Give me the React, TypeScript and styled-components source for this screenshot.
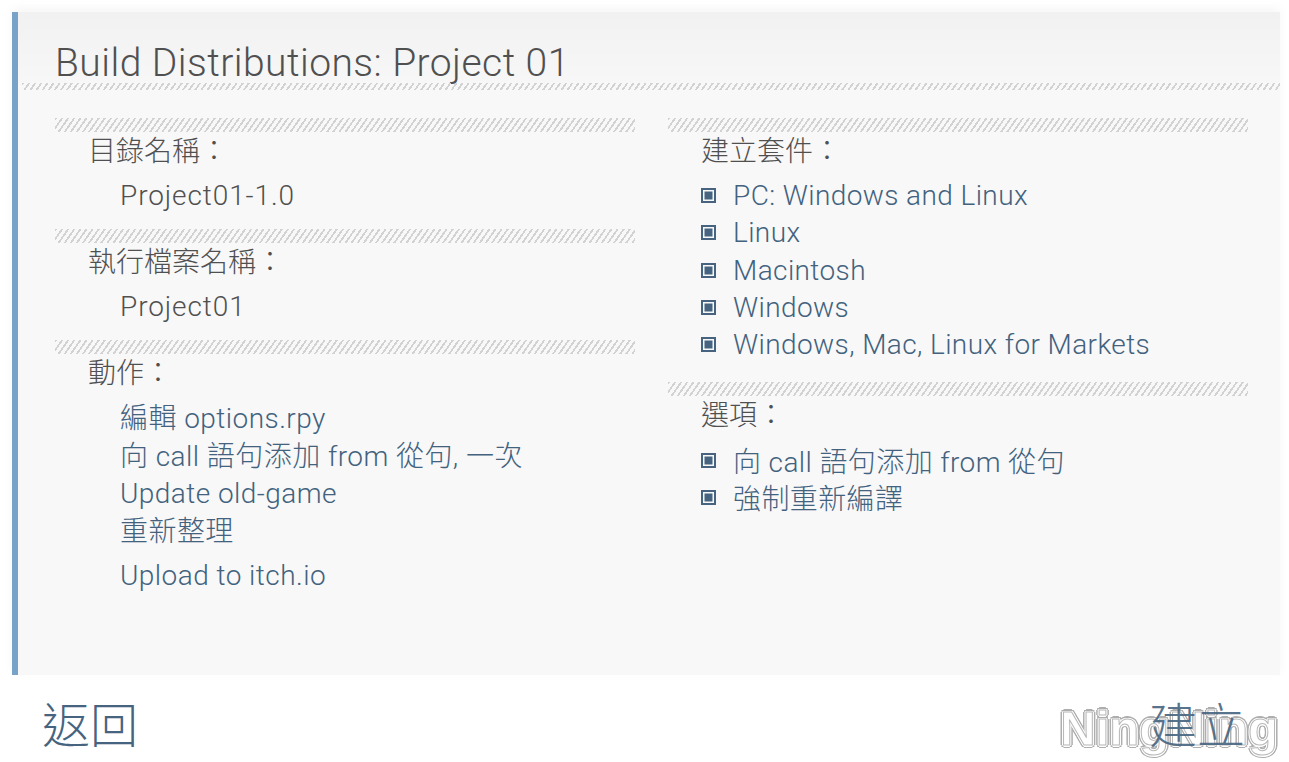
import React from 'react';
import styled, { createGlobalStyle } from 'styled-components';

const GlobalStyle = createGlobalStyle`
  html, body {
    margin: 0;
    padding: 0;
    background: #ffffff;
  }
  body {
    font-family: Roboto, "Noto Sans CJK TC", "Noto Sans", sans-serif;
    width: 1289px;
    height: 762px;
    overflow: hidden;
  }
`

const Screen = styled.div`
  position: relative;
  width: 1289px;
  height: 762px;
  display: flex;
  flex-direction: column;
  padding-top: 12px;
  box-sizing: border-box;
`

const Frame = styled.div`
  display: flex;
  margin-left: 12px;
  width: 1268px;
  height: 663px;
  box-shadow: 0 -4px 10px rgba(0, 0, 0, 0.04);
`

const SideBar = styled.div`
  width: 6px;
  background: #78a2c8;
  flex-shrink: 0;
`

const Panel = styled.div`
  flex: 1;
  background: #f8f8f8;
  display: flex;
  flex-direction: column;
`

const Header = styled.div`
  height: 71px;
  background: linear-gradient(#f1f1f1, #f7f7f7);
  display: flex;
  align-items: flex-end;
  padding-left: 37px;
  box-sizing: border-box;
`

const Title = styled.h1`
  margin: 0;
  font-weight: 300;
  font-size: 39px;
  line-height: 40px;
  letter-spacing: 0.45px;
  color: #505050;
`

const Hatch = styled.div<{ $h: number }>`
  height: ${p => p.$h}px;
  background: repeating-linear-gradient(
    125deg,
    #d2d2d2 0px,
    #d2d2d2 1.8px,
    transparent 1.8px,
    transparent 5px
  );
`

const TitleHatch = styled(Hatch)`
  margin-left: 4px;
`

const Columns = styled.div`
  display: grid;
  grid-template-columns: 580px 580px;
  column-gap: 33px;
  padding: 28px 0 0 37px;
`

const Column = styled.div`
  display: flex;
  flex-direction: column;
`

const Section = styled.div<{ $mb?: number }>`
  display: flex;
  flex-direction: column;
  margin-bottom: ${p => p.$mb ?? 10}px;
`

const Label = styled.div`
  padding-left: 33px;
  font-size: 28px;
  font-weight: 300;
  line-height: 40px;
  color: #505050;
`

const Value = styled.div`
  padding-left: 65px;
  font-size: 28px;
  font-weight: 300;
  letter-spacing: 0.9px;
  line-height: 47px;
  color: #505050;
`

const ActionList = styled.div`
  display: flex;
  flex-direction: column;
  padding-left: 65px;
  margin-top: 6px;
`

const Action = styled.div<{ $gap?: number }>`
  font-size: 28px;
  font-weight: 300;
  letter-spacing: 0.45px;
  line-height: 37.5px;
  color: #42627e;
  margin-top: ${p => p.$gap ?? 0}px;
`

const CheckList = styled.div`
  display: flex;
  flex-direction: column;
  padding-left: 33px;
  margin-top: 5px;
`

const CheckRow = styled.div`
  display: flex;
  align-items: center;
  height: 37.3px;
  gap: 17px;
  font-size: 28px;
  font-weight: 300;
  letter-spacing: 0.4px;
  color: #42627e;
`

const Box = styled.span`
  width: 15px;
  height: 15px;
  box-sizing: border-box;
  border: 2px solid #466480;
  background: #466480;
  box-shadow: inset 0 0 0 1.5px #f8f8f8;
  flex-shrink: 0;
`

const BottomBar = styled.div`
  display: flex;
  justify-content: space-between;
  align-items: center;
  padding: 7px 44px 0 42px;
  height: 87px;
  box-sizing: border-box;
`

const BigButton = styled.div<{ $top?: boolean }>`
  font-size: 48px;
  line-height: 60px;
  color: #466480;
  font-family: "Noto Sans CJK TC", sans-serif;
  font-weight: 300;
  position: relative;
  z-index: ${p => (p.$top ? 2 : 0)};
  opacity: ${p => (p.$top ? 0.9 : 1)};
`

const Watermark = styled.div`
  position: absolute;
  right: 11px;
  bottom: 6px;
  z-index: 1;
  opacity: 0.7;
  font-family: "Liberation Sans", Arial, sans-serif;
  font-weight: 700;
  font-size: 49px;
  color: #ffffff;
  -webkit-text-stroke: 1px #9a9a9a;
  text-shadow:
    1.5px 0 #ffffff, -1.5px 0 #ffffff, 0 1.5px #ffffff, 0 -1.5px #ffffff,
    1px 1px #ffffff, -1px -1px #ffffff, 1px -1px #ffffff, -1px 1px #ffffff,
    3px 0 #8c8c8c, -3px 0 #8c8c8c, 0 3px #8c8c8c, 0 -3px #8c8c8c,
    2px 2px #8c8c8c, -2px -2px #8c8c8c, 2px -2px #8c8c8c, -2px 2px #8c8c8c;
`

const packages = [
  'PC: Windows and Linux',
  'Linux',
  'Macintosh',
  'Windows',
  'Windows, Mac, Linux for Markets',
]

const options = ['向 call 語句添加 from 從句', '強制重新編譯']

const actions = [
  '編輯 options.rpy',
  '向 call 語句添加 from 從句, 一次',
  'Update old-game',
  '重新整理',
]

const App = () => {
  return (
    <Screen>
      <GlobalStyle />
      <Frame>
        <SideBar />
        <Panel>
          <Header>
            <Title>Build Distributions: Project 01</Title>
          </Header>
          <TitleHatch $h={7} />
          <Columns>
            <Column>
              <Section>
                <Hatch $h={14} />
                <Label>目錄名稱：</Label>
                <Value>Project01-1.0</Value>
              </Section>
              <Section>
                <Hatch $h={14} />
                <Label>執行檔案名稱：</Label>
                <Value>Project01</Value>
              </Section>
              <Section>
                <Hatch $h={14} />
                <Label>動作：</Label>
                <ActionList>
                  {actions.map(a => (
                    <Action key={a}>{a}</Action>
                  ))}
                  <Action $gap={7}>Upload to itch.io</Action>
                </ActionList>
              </Section>
            </Column>
            <Column>
              <Section $mb={19}>
                <Hatch $h={14} />
                <Label>建立套件：</Label>
                <CheckList>
                  {packages.map(p => (
                    <CheckRow key={p}>
                      <Box />
                      {p}
                    </CheckRow>
                  ))}
                </CheckList>
              </Section>
              <Section>
                <Hatch $h={14} />
                <Label>選項：</Label>
                <CheckList>
                  {options.map(o => (
                    <CheckRow key={o}>
                      <Box />
                      {o}
                    </CheckRow>
                  ))}
                </CheckList>
              </Section>
            </Column>
          </Columns>
        </Panel>
      </Frame>
      <BottomBar>
        <BigButton>返回</BigButton>
        <BigButton $top>建立</BigButton>
      </BottomBar>
      <Watermark>NingNing</Watermark>
    </Screen>
  )
}

export default App
